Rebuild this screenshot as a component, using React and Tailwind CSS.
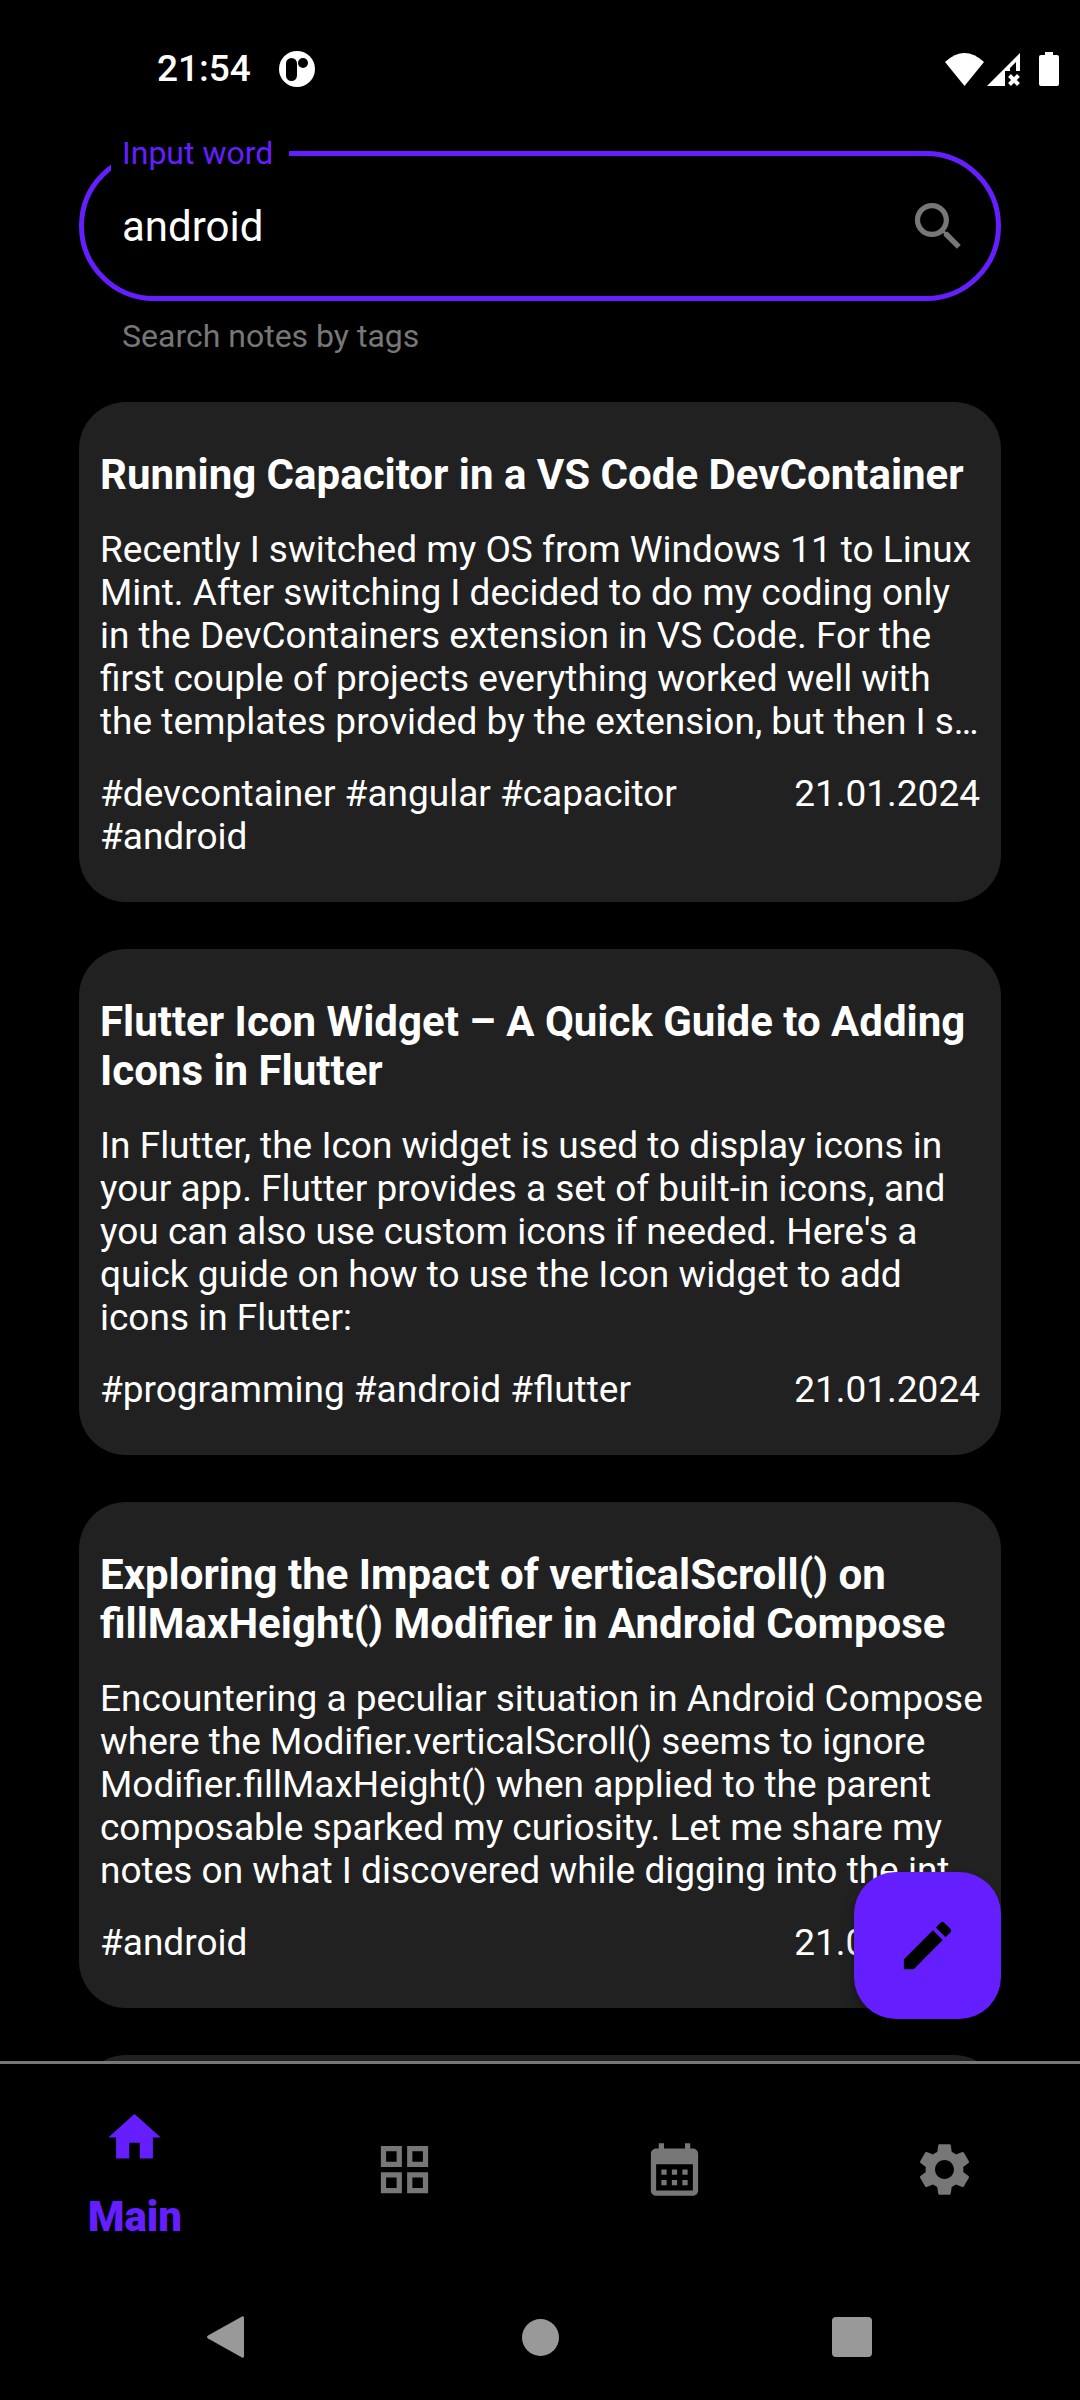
import { useState } from "react";

const notes = [
  {
    title: "Running Capacitor in a VS Code DevContainer",
    body: "Recently I switched my OS from Windows 11 to Linux Mint. After switching I decided to do my coding only in the DevContainers extension in VS Code. For the first couple of projects everything worked well with the templates provided by the extension, but then I s…",
    tags: "#devcontainer #angular #capacitor #android",
    date: "21.01.2024",
  },
  {
    title: "Flutter Icon Widget – A Quick Guide to Adding Icons in Flutter",
    body: "In Flutter, the Icon widget is used to display icons in your app. Flutter provides a set of built-in icons, and you can also use custom icons if needed. Here's a quick guide on how to use the Icon widget to add icons in Flutter:",
    tags: "#programming #android #flutter",
    date: "21.01.2024",
  },
  {
    title: "Exploring the Impact of verticalScroll() on fillMaxHeight() Modifier in Android Compose",
    body: "Encountering a peculiar situation in Android Compose where the Modifier.verticalScroll() seems to ignore Modifier.fillMaxHeight() when applied to the parent composable sparked my curiosity. Let me share my notes on what I discovered while digging into the int…",
    tags: "#android",
    date: "21.01.2024",
  },
];

const tabs = [
  { name: "Main", path: "M10 20v-6h4v6h5v-8h3L12 3 2 12h3v8z" },
  {
    name: "Categories",
    path: "M3 3v8h8V3H3zm6 6H5V5h4v4zm-6 4v8h8v-8H3zm6 6H5v-4h4v4zm4-16v8h8V3h-8zm6 6h-4V5h4v4zm-6 4v8h8v-8h-8zm6 6h-4v-4h4v4z",
  },
  {
    name: "Calendar",
    path: "M19 4h-1V2h-2v2H8V2H6v2H5c-1.11 0-1.99.9-1.99 2L3 20a2 2 0 0 0 2 2h14c1.1 0 2-.9 2-2V6c0-1.1-.9-2-2-2zm0 16H5V10h14v10zM9 14H7v-2h2v2zm4 0h-2v-2h2v2zm4 0h-2v-2h2v2zm-8 4H7v-2h2v2zm4 0h-2v-2h2v2zm4 0h-2v-2h2v2z",
  },
  {
    name: "Settings",
    path: "M19.14 12.94c.04-.3.06-.61.06-.94 0-.32-.02-.64-.07-.94l2.03-1.58c.18-.14.23-.41.12-.61l-1.92-3.32c-.12-.22-.37-.29-.59-.22l-2.39.96c-.5-.38-1.03-.7-1.62-.94l-.36-2.54c-.04-.24-.24-.41-.48-.41h-3.84c-.24 0-.43.17-.47.41l-.36 2.54c-.59.24-1.13.57-1.62.94l-2.39-.96c-.22-.08-.47 0-.59.22L2.74 8.87c-.12.21-.08.47.12.61l2.03 1.58c-.05.3-.09.63-.09.94s.02.64.07.94l-2.03 1.58c-.18.14-.23.41-.12.61l1.92 3.32c.12.22.37.29.59.22l2.39-.96c.5.38 1.03.7 1.62.94l.36 2.54c.05.24.24.41.48.41h3.84c.24 0 .44-.17.47-.41l.36-2.54c.59-.24 1.13-.56 1.62-.94l2.39.96c.22.08.47 0 .59-.22l1.92-3.32c.12-.22.07-.47-.12-.61l-2.01-1.58zM12 15.6c-1.98 0-3.6-1.62-3.6-3.6s1.62-3.6 3.6-3.6 3.6 1.62 3.6 3.6-1.62 3.6-3.6 3.6z",
  },
];

function Icon({ path }) {
  return (
    <svg viewBox="0 0 24 24" className="size-[63px] shrink-0 fill-current" aria-hidden="true">
      <path d={path} />
    </svg>
  );
}

function StatusBar() {
  return (
    <header className="flex h-[134px] shrink-0 items-center pt-1 pr-[21px] pl-[157px]">
      <time className="text-[37px] leading-10 font-medium">21:54</time>
      <svg viewBox="0 0 36 36" className="ml-7 size-9" aria-hidden="true">
        <circle cx="18" cy="18" r="18" fill="#fff" />
        <rect x="7" y="7" width="11" height="23" rx="5.5" fill="#000" />
        <circle cx="24" cy="12" r="5" fill="#000" />
      </svg>
      <div className="ml-auto flex items-center">
        <svg viewBox="0 0 39 33" className="h-[33px] w-[39px]" aria-hidden="true">
          <path d="M0 9Q19.500-9 39 9L19.500 33z" fill="#fff" />
        </svg>
        <svg viewBox="0 0 33 33" className="ml-[3px] size-[33px]" aria-hidden="true">
          <path d="M33 0v18h-4V9l-6 6v3h-5v15H0z" fill="#fff" />
          <path d="M22.500 22.500l9 9m0-9l-9 9" stroke="#fff" strokeWidth="4" />
        </svg>
        <svg viewBox="0 0 20 34" className="ml-[19px] h-[34px] w-5" aria-hidden="true">
          <path d="M6 0h8v3h4a2 2 0 0 1 2 2v27a2 2 0 0 1-2 2H2a2 2 0 0 1-2-2V5a2 2 0 0 1 2-2h4z" fill="#fff" />
        </svg>
      </div>
    </header>
  );
}

function SearchField() {
  const [query, setQuery] = useState("android");
  return (
    <div>
      <fieldset className="min-w-0 rounded-[76px] border-[5px] border-[#651fff] pb-4">
        <legend className="ml-[27px] pr-4 pl-[11px] text-[32px] leading-[38px] text-[#651fff]">
          <label htmlFor="query">Input word</label>
        </legend>
        <div className="flex h-[108px] items-center pr-[26px] pl-[38px]">
          <input
            id="query"
            type="text"
            value={query}
            onChange={(e) => setQuery(e.target.value)}
            aria-describedby="query-hint"
            className="h-full min-w-0 flex-1 bg-transparent text-[42px] outline-none"
          />
          <button type="button" aria-label="Search" className="text-[#777777]">
            <Icon path="M15.500 14h-.79l-.28-.27C15.410 12.590 16 11.110 16 9.500 16 5.910 13.090 3 9.500 3S3 5.910 3 9.500 5.910 16 9.500 16c1.610 0 3.090-.59 4.230-1.570l.27.28v.79l5 4.990L20.490 19l-4.990-5zm-6 0C7.010 14 5 11.990 5 9.500S7.010 5 9.500 5 14 7.010 14 9.500 11.990 14 9.500 14z" />
          </button>
        </div>
      </fieldset>
      <p id="query-hint" className="mt-4 pl-[43px] text-[32px] leading-[38px] text-[#777777]">
        Search notes by tags
      </p>
    </div>
  );
}

function NoteCard({ title, body, tags, date }) {
  return (
    <article className="flex flex-col gap-[29px] rounded-[47px] bg-[#212121] px-[21px] pt-12 pb-11 text-[37px] leading-[43px]">
      <h2 className="text-[42px] leading-[49px] font-bold">{title}</h2>
      <p className="-mr-1 line-clamp-5">{body}</p>
      <div className="flex justify-between gap-24">
        <p>{tags}</p>
        <time>{date}</time>
      </div>
    </article>
  );
}

export default function App() {
  const [active, setActive] = useState("Main");
  return (
    <div className="flex h-screen flex-col bg-black font-['Roboto',sans-serif] text-white">
      <StatusBar />
      <div className="relative flex min-h-0 flex-1 flex-col">
        <main className="flex min-h-0 flex-1 flex-col gap-[47px] overflow-hidden px-[79px]">
          <SearchField />
          {notes.map((note) => (
            <NoteCard key={note.title} {...note} />
          ))}
          <div className="h-[500px] shrink-0 rounded-[47px] bg-[#212121]" />
        </main>
        <button
          type="button"
          aria-label="New note"
          className="absolute right-[79px] bottom-[42px] flex size-[147px] items-center justify-center rounded-[42px] bg-[#651fff] text-black shadow-lg shadow-black/40"
        >
          <Icon path="M3 17.250V21h3.750L17.810 9.940l-3.750-3.750L3 17.250zM20.710 7.040c.39-.39.39-1.020 0-1.410l-2.340-2.340c-.39-.39-1.020-.39-1.410 0l-1.830 1.830 3.750 3.750 1.830-1.830z" />
        </button>
      </div>
      <nav className="grid h-[213px] shrink-0 grid-cols-4 border-t-[3px] border-[#777777] pr-px">
        {tabs.map(({ name, path }) => (
          <button
            key={name}
            type="button"
            aria-label={name}
            onClick={() => setActive(name)}
            className={
              name === active
                ? "flex flex-col items-center justify-center gap-8 text-[#651fff]"
                : "flex flex-col items-center justify-center gap-8 text-[#777777]"
            }
          >
            <Icon path={path} />
            {name === active && <span className="text-[42px] leading-8 font-black">{name}</span>}
          </button>
        ))}
      </nav>
      <footer className="grid h-[126px] shrink-0 grid-cols-3 place-items-center px-18 text-[#999999]">
        <button type="button" aria-label="Back">
          <svg viewBox="0 0 44 44" className="size-11 fill-current">
            <path d="M2 20.500L36 1.500Q38 .5 38 3v38q0 2.500-2 1.500L2 23.500q-2-1.500 0-3z" />
          </svg>
        </button>
        <button type="button" aria-label="Home" className="size-[37px] rounded-full bg-current" />
        <button type="button" aria-label="Recent apps" className="size-10 rounded-[4px] bg-current" />
      </footer>
    </div>
  );
}
